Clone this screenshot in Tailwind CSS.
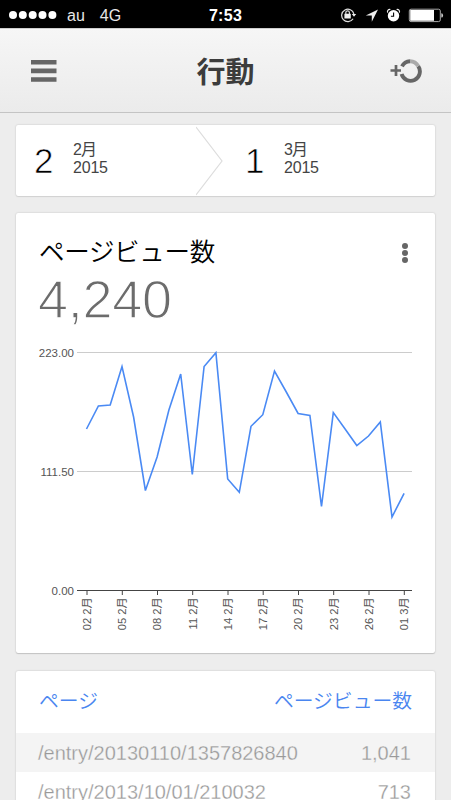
<!DOCTYPE html>
<html lang="ja">
<head>
<meta charset="utf-8">
<title>行動</title>
<script src="https://cdn.jsdelivr.net/npm/@tailwindcss/browser@4"></script>
</head>
<body class="w-[451px] h-[800px] overflow-hidden bg-[#ededed] font-['Liberation_Sans','Noto_Sans_CJK_JP',sans-serif] flex flex-col">
<div class="h-7 shrink-0 bg-black text-[#e8e8e8] grid grid-cols-3 items-center text-base leading-7">
  <div class="flex items-center pl-[9px]">
    <svg class="w-12 h-2 shrink-0" viewBox="0 0 48 8" fill="#fff"><circle cx="4" cy="4" r="4"/><circle cx="13.8" cy="4" r="4"/><circle cx="23.7" cy="4" r="4"/><circle cx="33.5" cy="4" r="4"/><circle cx="43.4" cy="4" r="4"/></svg>
    <span class="ml-[10px] pt-0.5">au</span><span class="ml-[15px] pt-0.5">4G</span>
  </div>
  <div class="text-center font-bold text-white tracking-[0.3px] pt-0.5">7:53</div>
  <svg class="w-[110px] h-7 justify-self-end" viewBox="341 0 110 28">
    <g fill="none" stroke="#ddd" stroke-width="1.2"><path d="M353.1 17.8A6.2 6.2 0 1 1 353.9 13"/><path d="M345.8 13v-1.4a1.8 1.8 0 0 1 3.6 0v1.4"/></g>
    <path d="M344.4 12.8h6.4v4.8h-6.4zM351.8 13h4.4l-2.2 2.8z" fill="#eee"/>
    <path d="M378 8.5L365.8 14.4H371.8V20.8Z" fill="#eee"/>
    <circle cx="393.5" cy="14.8" r="5.7" fill="#fff"/><path d="M393.6 11.5v3.8h-2.7" fill="none" stroke="#000" stroke-width="1.1"/>
    <path d="M387.6 11.7C387 9.2 388.4 8.2 390.4 8.5M399.4 11.7C400 9.2 398.6 8.2 396.6 8.5" fill="none" stroke="#eee" stroke-width="1.2"/>
    <rect x="409.3" y="8.2" width="31" height="12.4" rx="1.7" fill="none" stroke="#aaa" stroke-width="1"/>
    <rect x="410.2" y="9" width="23.8" height="10.8" fill="#fff"/><path d="M441.3 12.2q1.8 0 1.8 2.2t-1.8 2.2z" fill="#ccc"/>
  </svg>
</div>
<header class="h-[85px] shrink-0 border-t border-t-[#cfcfcf] border-b border-b-[#c4c4c4] bg-linear-to-b from-[#f6f6f6] to-[#ebebeb] grid grid-cols-3 items-center">
  <svg class="ml-[31px] mt-px w-[26px] h-[22px]" viewBox="0 0 26 22" fill="#666"><path d="M0 0h25.5v4.6H0zM0 8.6h25.5v4.6H0zM0 17.2h25.5v4.6H0z"/></svg>
  <h1 class="text-center text-[29px] leading-[40px] pt-[4px] font-bold text-[#3c3c3c]">行動</h1>
  <svg class="justify-self-end mr-[29px] w-8 h-6" viewBox="390 59 32 24" fill="none" stroke="#666">
    <path d="M390.5 70.5h10.5M396 65v11" stroke-width="2.7"/>
    <path d="M402 66.4A9.3 9.3 0 0 1 410 61.2M418.2 66.2A9.3 9.3 0 1 1 401.6 74" stroke-width="3.9"/>
    <path d="M410 61.2A9.3 9.3 0 0 1 418.2 66.2" stroke="#aaa" stroke-width="3.9"/>
  </svg>
</header>
<main class="px-4 pt-3 flex flex-col gap-[17px]">
  <section class="h-[71px] shrink-0 bg-white rounded-[2px] shadow-[0_0_2px_#0003,0_1px_1px_#0001] flex">
    <div class="w-[180px] flex pl-[18px] pt-[14px]">
      <span class="w-[39px] text-[35px] leading-[43px] text-black [-webkit-text-stroke:0.7px_white]">2</span>
      <div class="text-base text-[#444] leading-[18px] tracking-[-0.2px] pt-0.5"><div class="tracking-[-0.8px]">2月</div><div>2015</div></div>
    </div>
    <svg class="w-[27px] h-[71px] shrink-0" viewBox="0 0 27 71" fill="none" stroke="#ddd" stroke-width="1.2"><path d="M0 2L26 36L0 70"/></svg>
    <div class="flex pl-[22px] pt-[14px]">
      <span class="w-[39px] text-[35px] leading-[43px] text-black [-webkit-text-stroke:0.7px_white]">1</span>
      <div class="text-base text-[#444] leading-[18px] tracking-[-0.2px] pt-0.5"><div class="tracking-[-0.8px]">3月</div><div>2015</div></div>
    </div>
  </section>
  <section class="h-[440px] shrink-0 bg-white rounded-[2px] shadow-[0_0_2px_#0003,0_1px_1px_#0002] flex flex-col">
    <div class="flex justify-between pl-[23px] pr-[27px] pt-[19px] h-[56px] shrink-0">
      <h2 class="text-[25.5px] leading-9 tracking-[-0.3px] text-black font-['Noto_Sans_CJK_JP',sans-serif] font-[350]">ページビュー数</h2>
      <svg class="w-1.5 h-5 mt-[11px]" viewBox="0 0 6 20" fill="#666"><circle cx="3" cy="3" r="3"/><circle cx="3" cy="10" r="3"/><circle cx="3" cy="17" r="3"/></svg>
    </div>
    <div class="pl-[22px] h-[66px] shrink-0 text-[54px] leading-[60px] tracking-[-0.3px] text-[#6c6c6c] [-webkit-text-stroke:1.3px_white]">4,240</div>
    <svg class="w-[419px] h-[305px] shrink-0" viewBox="16 335 419 305">
      <path d="M77 352.5H412M77 471.5H412" stroke="#ccc"/>
      <path d="M77 590.5H412M87 591v4M122.3 591v4M157.5 591v4M192.7 591v4M228 591v4M263.2 591v4M298.5 591v4M333.7 591v4M369 591v4M404.3 591v4" stroke="#444"/>
      <polyline fill="none" stroke="#4a8af4" stroke-width="1.6" stroke-linejoin="miter" points="86.5,429 98.4,406 110.2,405 122,366.5 133.6,417 145.4,490.5 157.1,457 168.9,410 180.7,374 192.3,474.5 204.1,366.5 215.9,352.7 227.7,479 239.3,492.3 251,426.3 262.8,414.7 274.5,371 286.3,392 298.1,413.5 309.9,415.5 321.5,506.5 333.3,412.6 345.1,429 356.8,445.5 368.5,436 380.3,422 392,517 404.1,493.3"/>
      <g fill="#555" font-size="11.5" text-anchor="end">
        <text x="74" y="357">223.00</text><text x="74" y="476">111.50</text><text x="74" y="595">0.00</text>
      </g>
      <g fill="#555" font-size="11.2" text-anchor="end">
        <text transform="translate(91 597.3) rotate(-90)">02 2月</text>
        <text transform="translate(126.2 597.3) rotate(-90)">05 2月</text>
        <text transform="translate(161.4 597.3) rotate(-90)">08 2月</text>
        <text transform="translate(196.6 597.3) rotate(-90)">11 2月</text>
        <text transform="translate(231.9 597.3) rotate(-90)">14 2月</text>
        <text transform="translate(267.1 597.3) rotate(-90)">17 2月</text>
        <text transform="translate(302.4 597.3) rotate(-90)">20 2月</text>
        <text transform="translate(337.6 597.3) rotate(-90)">23 2月</text>
        <text transform="translate(372.9 597.3) rotate(-90)">26 2月</text>
        <text transform="translate(408.2 597.3) rotate(-90)">01 3月</text>
      </g>
    </svg>
  </section>
  <section class="mt-px h-[160px] shrink-0 bg-white rounded-[2px] shadow-[0_0_2px_#0003] text-xl text-[#999]">
    <div class="h-[62px] pb-1 pl-[23px] pr-[23px] flex justify-between items-center text-[19.8px] text-[#4a86f0] font-['Noto_Sans_CJK_JP',sans-serif] font-[350]"><span>ページ</span><span>ページビュー数</span></div>
    <div class="h-[39px] pl-[22px] pr-6 pt-px flex justify-between items-center bg-[#f4f4f4]"><span class="[-webkit-text-stroke:0.3px_#f4f4f4]">/entry/20130110/1357826840</span><span class="[-webkit-text-stroke:0.3px_#f4f4f4]">1,041</span></div>
    <div class="h-[39px] pl-[22px] pr-6 pt-px flex justify-between items-center"><span class="[-webkit-text-stroke:0.3px_white]">/entry/2013/10/01/210032</span><span class="[-webkit-text-stroke:0.3px_white]">713</span></div>
  </section>
</main>
</body>
</html>
